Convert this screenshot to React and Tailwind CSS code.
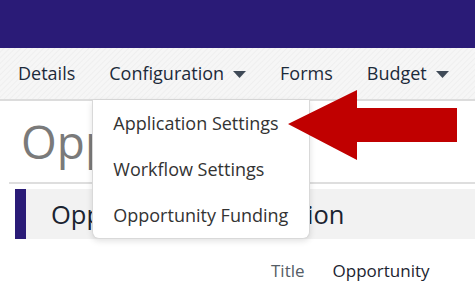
import React from "react";

function Caret() {
  return (
    <svg width="13" height="7" viewBox="0 0 13 7" className="ml-[9px] mt-[2px]">
      <path d="M0 0 H13 L6.5 7 Z" fill="#3f4a57" />
    </svg>
  );
}

function Arrow() {
  return (
    <svg
      className="absolute z-20 left-[286px] top-[88px]"
      width="174"
      height="74"
      viewBox="286 88 174 74"
    >
      <path d="M288 124 L357 90 L357 108 L457 108 L457 142 L357 142 L357 160 Z" fill="#c00000" />
    </svg>
  );
}

export default function App() {
  const menu = ["Application Settings", "Workflow Settings", "Opportunity Funding"];
  return (
    <div className="relative w-[475px] h-[295px] overflow-hidden bg-white font-['Open_Sans',sans-serif]">
      <div className="h-[48px] bg-[#2a1b77]" />
      <nav className="relative z-10 h-[53px] flex items-stretch px-[18px] gap-[34px] text-[18px] text-[#1c2a3a] border-b-2 border-[#dcdcdc] bg-[repeating-linear-gradient(135deg,#f6f6f6_0px,#f6f6f6_2px,#efefef_3px,#f6f6f6_4px)]">
        <span className="flex items-center">Details</span>
        <span className="relative flex items-center">
          Configuration
          <Caret />
          <div className="absolute left-[-17px] top-[calc(100%+1px)] w-[218px] bg-white border border-[#d9d9d9] border-t-0 rounded-b-[7px] shadow-[0_2px_6px_rgba(0,0,0,0.12)] text-[#333]">
            {menu.map((m) => (
              <div key={m} className="h-[46px] flex items-center pl-[20px]">
                {m}
              </div>
            ))}
          </div>
        </span>
        <span className="flex items-center">Forms</span>
        <span className="flex items-center">
          Budget
          <Caret />
        </span>
      </nav>
      <div className="pl-[9px]">
        <h1 className="mt-[17px] pl-[12px] text-[46px] leading-none h-[46px] text-[#7a7a7a]">Opportunity</h1>
        <div className="mt-[18px] h-[2px] bg-[#dedede]" />
      </div>
      <div className="mt-[5px] ml-[15px] h-[50px] flex items-center bg-[#f2f2f2] border-l-[11px] border-[#2a1b77]">
        <span className="pl-[25px] text-[25.5px] text-[#1a2330]">Opportunity Information</span>
      </div>
      <div className="mt-[19px] flex text-[17px]">
        <span className="ml-[271px] text-[#555d66]">Title</span>
        <span className="ml-[28px] text-[#1c2430]">Opportunity</span>
      </div>
      <Arrow />
    </div>
  );
}
